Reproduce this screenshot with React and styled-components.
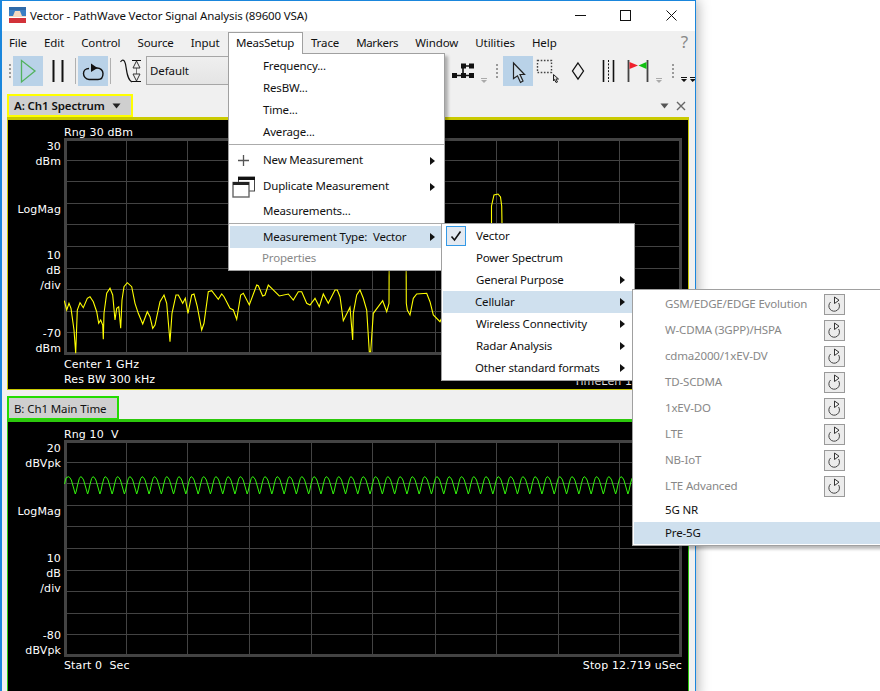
import React from "react";
import styled, { createGlobalStyle } from "styled-components";

const Global = createGlobalStyle`
  html, body { margin: 0; padding: 0; background: #fff; }
  body { width: 880px; height: 691px; overflow: hidden; font-family: "Noto Sans", "Open Sans", sans-serif; font-size: 11.5px; letter-spacing: -0.1px; color: #111; }
  #root { width: 880px; height: 691px; }
`;

const Page = styled.div`
  position: relative; width: 880px; height: 691px; overflow: hidden; background: #fff;
`;
const Window = styled.div`
  width: 696px; height: 700px; box-sizing: border-box; display: flex; flex-direction: column;
  background: #f0f0f0; border: 1px solid #1a86dc; border-left-width: 2px; border-bottom: 0;
  box-shadow: 2px 0 12px rgba(0,0,0,.3);
`;
const TitleBar = styled.div`
  height: 30px; flex: none; box-sizing: border-box; background: #fff; display: flex; align-items: center; padding: 0 0 2px 7px;
`;
const TitleText = styled.span`
  margin-left: 4px; color: #111; white-space: nowrap; letter-spacing: -0.14px;
`;
const Caption = styled.div`
  margin-left: auto; display: flex; padding-right: 1px;
`;
const CaptionButton = styled.div`
  width: 45.5px; height: 28px; display: flex; align-items: center; justify-content: center;
`;
const MenuBar = styled.div`
  height: 23px; flex: none; display: flex; align-items: center; padding-left: 7px; gap: 17px; position: relative;
`;
const MenuTitle = styled.span`
  white-space: nowrap; color: #111; letter-spacing: ${p => p.$ls ?? -0.1}px;
`;
const HelpMark = styled.span`
  position: absolute; right: 7px; top: 0; font-size: 17px; line-height: 22px; color: #888;
`;
const Toolbar = styled.div`
  height: 36px; flex: none; display: flex; align-items: flex-start; padding: 2px 0 0 5px; box-sizing: border-box;
`;
const Slot = styled.div`
  width: ${p => p.$w || 30}px; height: 30px; flex: none; margin-left: ${p => p.$ml || 0}px;
  background: ${p => (p.$active ? "#b9d2e8" : "transparent")}; display: flex; align-items: center; justify-content: center;
`;
const Grip = styled.i`
  display: block; width: 2px; height: 16px; margin-top: 2px;
  background: repeating-linear-gradient(to bottom, #9a9a9a 0 2px, transparent 2px 4px);
`;
const ToolSep = styled.i`
  display: block; width: 1px; height: 26px; background: #b0b0b0;
`;
const Combo = styled.div`
  width: 299px; height: 29px; flex: none; box-sizing: border-box; border: 1px solid #a6a6a6; background: linear-gradient(#efefef, #e4e4e4);
  display: flex; align-items: center; padding-left: 3px; color: #111;
`;
const PanelArea = styled.div`
  flex: 1; display: flex; flex-direction: column; padding: 0 6px 0 5px; min-height: 0;
`;
const PanelHeader = styled.div`
  height: ${p => p.$h}px; flex: none; box-sizing: border-box; display: flex; align-items: flex-end;
`;
const Tab = styled.div`
  height: 23px; width: ${p => p.$w}px; box-sizing: border-box; border: 2px solid ${p => p.$color};
  background: #cfcfcf; display: flex; align-items: center; padding-left: 5px; gap: 7px; white-space: nowrap;
  font-weight: ${p => (p.$bold ? 600 : 400)}; color: #111; border-bottom-width: ${p => (p.$bold ? 2 : 1)}px;
`;
const PanelTools = styled.div`
  margin-left: auto; display: flex; align-items: center; gap: 7px; height: 23px; padding-right: 3px;
`;
const Scope = styled.div`
  flex: none; background: #000; box-sizing: border-box; border: 1px solid ${p => p.$color};
  border-top: 3px solid ${p => p.$color}; border-bottom-width: ${p => (p.$open ? 0 : 1)}px; height: ${p => p.$h}px;
  display: grid; grid-template-columns: 53px 618px; column-gap: 3px; grid-template-rows: ${p => p.$top}px 217px 1fr;
  color: #fff; font-family: "DejaVu Sans", sans-serif; font-size: 11px; letter-spacing: .12px; line-height: 15px;
`;
const RangeLabel = styled.div`
  grid-column: 2; grid-row: 1; align-self: end; line-height: 13px; margin-bottom: -1px; white-space: nowrap;
`;
const Axis = styled.div`
  grid-column: 1; grid-row: 2; display: flex; flex-direction: column; align-items: flex-end; padding-top: ${p => p.$pad}px;
`;
const AxisGroup = styled.div`
  text-align: right; margin-top: ${p => p.$mt || 0}px; white-space: nowrap;
`;
const Plot = styled.svg`
  grid-column: 2; grid-row: 2; display: block;
`;
const ScopeFooter = styled.div`
  grid-column: 2; grid-row: 3; display: flex; justify-content: space-between; align-items: flex-start; padding-top: ${p => p.$pad}px; white-space: nowrap;
`;
const FooterLow = styled.span`
  margin-top: ${p => p.$mt || 0}px;
`;
const Menu = styled.div`
  position: absolute; left: ${p => p.$x}px; top: ${p => p.$y}px; width: ${p => p.$w}px; box-sizing: border-box;
  background: #fff; border: 1px solid #a0a0a0; padding: 1px; box-shadow: 3px 3px 3px rgba(0,0,0,.28); color: #111; z-index: ${p => p.$z};
  letter-spacing: -0.17px;
`;
const TabOpen = styled.div`
  position: absolute; left: 228px; top: 32px; width: 75px; height: 22px; box-sizing: border-box; background: #fff; z-index: 5;
  border: 1px solid #a0a0a0; border-bottom: 0; padding-left: 7px; line-height: 20px; color: #111; letter-spacing: -0.2px;
`;
const Row = styled.div`
  height: ${p => p.$h || 22}px; box-sizing: border-box; display: flex; align-items: center; padding: 0 0 2px ${p => p.$indent}px; white-space: pre; position: relative;
  background: ${p => (p.$hi ? "#cfe0ee" : "transparent")}; color: ${p => (p.$off ? "#888" : "inherit")};
`;
const Separator = styled.div`
  height: 1px; background: #ababab; margin: ${p => p.$mt}px -1px ${p => p.$mb}px;
`;
const Arrow = styled.i`
  position: absolute; left: ${p => p.$x}px; top: 50%; margin-top: -4px; width: 0; height: 0;
  border-left: 5px solid #111; border-top: 4px solid transparent; border-bottom: 4px solid transparent;
`;
const Leading = styled.span`
  position: absolute; left: ${p => p.$x}px; top: 0; bottom: 0; display: flex; align-items: center;
`;
const CheckBox = styled.span`
  position: absolute; left: 3px; top: 1px; width: 20px; height: 20px; box-sizing: border-box; border: 1px solid #3399e6; background: #e3e9f1;
  display: flex; align-items: center; justify-content: center;
`;
const ResetButton = styled.span`
  position: absolute; left: 190px; top: 2.5px; width: 21px; height: 21px; box-sizing: border-box; border: 1px solid #9a9a9a; background: #ececec;
  display: flex; align-items: center; justify-content: center;
`;

const toPoints = a => a.map(([x, y]) => `${x},${y}`).join(" ");
// read from the reference, in page coordinates
const zoomPts = [[193,92],[200,120],[207,100],[213,115],[222,180],[227,250],[232,120],[240,98],[250,113],[262,85],[270,80],[280,95],[290,125],[296,160],[302,150],[308,165],[310,208],[312,130],[320,70],[330,55],[338,75],[345,150],[350,115],[356,110],[362,175],[366,90],[372,50],[382,38],[395,50],[405,100],[415,130],[428,162],[442,125],[450,140],[458,175],[465,165],[480,95],[492,75],[500,100],[510,215],[516,130],[528,75],[535,75],[548,100],[556,85],[564,130],[575,75],[582,72],[592,110],[605,180],[612,160],[625,65],[635,62],[655,88],[665,72],[672,80],[690,115],[700,120],[710,148],[722,75],[730,70],[748,105],[770,45],[775,47],[788,78],[795,75],[805,45],[815,55],[838,78],[865,72],[880,90],[895,65],[905,65],[920,100],[930,105],[945,85],[958,110],[970,72],[985,100],[1005,60],[1012,60],[1020,80],[1030,152],[1050,112],[1058,210],[1060,130],[1070,75],[1080,60],[1090,85],[1100,120],[1108,245],[1112,245],[1120,130],[1148,92],[1160,125],[1167,100],[1168,-120]];
const zoomPts2 = [[1218,-120],[1219,100],[1222,120],[1230,135],[1240,85],[1250,72],[1280,70],[1290,95],[1300,135],[1320,155]];
const spectrum = [...zoomPts, ...zoomPts2].map(([x, y]) => [+(x / 3).toFixed(1), +(270 + y / 3).toFixed(1)])
  .concat([[450,300],[470,300],[488,290],[491.5,224],[491.5,206],[494,195],[498,194],[500.5,197],[501.7,206],[502,224],[510,300],[560,310],[640,320]]);

const timeTrace = (() => {
  const shape = [[0,476.7],[1.5,477.5],[3,480],[5,487],[7,494],[8,491],[9.5,484],[11,478.5]];
  const out = [[64.5,484],[66,478]];
  for (let k = 0; k < 50; k++) for (const [dx, y] of shape) { const x = 68.3 + k * 12.28 + dx; if (x < 680) out.push([+x.toFixed(1), y]); }
  return out;
})();

const H_LINES = [22,43,65,86,108,130,151,173,194];
const V_LINES = [62,123,185,247,308,371,432,494,555];

const Chart = ({ children }) => (
  <Plot width="618" height="217" viewBox="0 0 618 217">
    {H_LINES.map(y => <line key={y} x1="3" x2="615" y1={y + .5} y2={y + .5} stroke="#434343" />)}
    {V_LINES.map(x => <line key={x} y1="3" y2="214" x1={x + .5} x2={x + .5} stroke="#434343" />)}
    <rect x="1.5" y="1.5" width="615" height="214" fill="none" stroke="#434343" strokeWidth="3" />
    {children}
  </Plot>
);

const AppIcon = () => (
  <svg width="17" height="16" viewBox="0 0 17 16">
    <rect width="17" height="16" fill="#3b7fc4" />
    <rect y="0" width="17" height="3" fill="#2f6aa8" />
    <path d="M0 9H4L6 4H11L13 9H17V11H0Z" fill="#f5d9c0" />
    <rect y="11" width="17" height="5" fill="#d2323a" />
    <rect y="10" width="17" height="1" fill="#fff" />
  </svg>
);
const Tri = ({ fill = "#555" }) => (
  <svg width="9" height="6" viewBox="0 0 9 6"><path d="M.5 .5H8.5L4.5 5.5Z" fill={fill} /></svg>
);
const MiniDrop = () => (
  <svg width="12" height="30" viewBox="0 0 12 30">
    <path d="M3 22.5H9" stroke="#aaa" /><path d="M3 24H9L6 27Z" fill="#aaa" />
  </svg>
);
const Chevrons = () => (
  <svg width="14" height="30" viewBox="0 0 14 30">
    <path d="M0 21.5H6M9 21.5H14" stroke="#111" /><path d="M0 23H6L3 26ZM9 23H14V24L11.5 26Z" fill="#111" />
  </svg>
);
const Icon30 = ({ children }) => <svg width="30" height="30" viewBox="0 0 30 30">{children}</svg>;

const ResetIcon = () => (
  <svg width="19" height="19" viewBox="0 0 19 19">
    <path d="M5.6 7A5.3 5.3 0 1 0 13.6 8" fill="none" stroke="#444" strokeWidth="1" />
    <path d="M9.5 2V8.5L14 5.2Z" fill="#f6f6f6" stroke="#333" strokeWidth="1" />
  </svg>
);

const Arrowed = ({ x }) => <Arrow $x={x} />;

const CELLULAR = ["GSM/EDGE/EDGE Evolution","W-CDMA (3GPP)/HSPA","cdma2000/1xEV-DV","TD-SCDMA","1xEV-DO","LTE","NB-IoT","LTE Advanced"];
const MENUS = ["File","Edit","Control","Source","Input"];

export default function App() {
  return (
    <Page>
      <Global />
      <Window>
        <TitleBar>
          <AppIcon />
          <TitleText>Vector - PathWave Vector Signal Analysis (89600 VSA)</TitleText>
          <Caption>
            <CaptionButton><svg width="11" height="11"><path d="M0 5.5H11" stroke="#111" /></svg></CaptionButton>
            <CaptionButton><svg width="11" height="11"><rect x=".5" y=".5" width="10" height="10" fill="none" stroke="#111" /></svg></CaptionButton>
            <CaptionButton><svg width="11" height="11"><path d="M.5 .5L10.5 10.5M10.5 .5L.5 10.5" stroke="#111" /></svg></CaptionButton>
          </Caption>
        </TitleBar>
        <MenuBar>
          {MENUS.map(m => <MenuTitle key={m}>{m}</MenuTitle>)}
          <MenuTitle $ls={-0.3}>MeasSetup</MenuTitle>
          <MenuTitle>Trace</MenuTitle>
          <MenuTitle $ls={-0.35}>Markers</MenuTitle>
          <MenuTitle>Window</MenuTitle>
          <MenuTitle>Utilities</MenuTitle>
          <MenuTitle>Help</MenuTitle>
          <HelpMark>?</HelpMark>
        </MenuBar>
        <Toolbar>
          <Slot $w={6}><Grip /></Slot>
          <Slot $active><Icon30><path d="M8.5 4.5V26L22 15Z" fill="none" stroke="#52b25e" strokeWidth="1.3" /></Icon30></Slot>
          <Slot><Icon30><path d="M10.5 4V26M19.5 4V26" stroke="#111" strokeWidth="2" /></Icon30></Slot>
          <Slot $w={5}><ToolSep /></Slot>
          <Slot $active><Icon30>
            <path d="M11 12.5C7.5 12.5 5.5 15 5.5 17.5S7.5 23.5 11 23.5H20C23.5 23.5 25 20.5 25 17.5S22.5 12 19 12H14" fill="none" stroke="#111" strokeWidth="1.4" />
            <path d="M13 7.5V16L19.5 12Z" fill="#111" />
          </Icon30></Slot>
          <Slot $w={5}><ToolSep /></Slot>
          <Slot $w={33}><svg width="33" height="30" viewBox="0 0 33 30">
            <path d="M7.5 6C10 2.5 12 4 13 11S15 24 19 26" fill="none" stroke="#111" strokeWidth="1.2" />
            <path d="M19 4.5H28M19 25.5H28" stroke="#111" strokeWidth="1.2" />
            <path d="M23.5 5V25" stroke="#777" />
            <path d="M23.5 5L27 12H20ZM23.5 25L20 18H27Z" fill="#eee" stroke="#333" />
          </svg></Slot>
          <Combo>Default</Combo>
          <Slot $ml={3}><Icon30>
            <path d="M4 19.5H26M15 10V19.5M15 10H26" stroke="#111" strokeWidth="1.6" />
            <rect x="4" y="17" width="5" height="5" fill="#111" />
            <rect x="13" y="17" width="5" height="5" fill="#111" />
            <rect x="21" y="17" width="5" height="5" fill="#111" />
            <rect x="13" y="7.5" width="5" height="5" fill="#111" />
            <rect x="21" y="7.5" width="5" height="5" fill="#111" />
          </Icon30></Slot>
          <Slot $w={12}><MiniDrop /></Slot>
          <Slot $w={13}><Grip /></Slot>
          <Slot $active><Icon30>
            <path d="M10.5 7L21.5 18.5L17 18.5L20 25L17.5 26.5L14.5 19.8L10.5 22.5Z" fill="#c9dbe9" stroke="#222" strokeWidth="1.2" />
          </Icon30></Slot>
          <Slot><Icon30>
            <rect x="4.5" y="4.5" width="14" height="12" fill="none" stroke="#444" strokeDasharray="1.6 1.6" strokeWidth="1.4" />
            <path d="M20.5 18.5L25.5 23H23L24.5 26L23 26.5L21.5 23.5L20.5 25Z" fill="#ddd" stroke="#222" />
          </Icon30></Slot>
          <Slot><Icon30><path d="M15 7L20.5 15L15 23L9.5 15Z" fill="none" stroke="#111" strokeWidth="1.3" /></Icon30></Slot>
          <Slot><Icon30>
            <path d="M10.5 4V26M20.5 4V26" stroke="#111" strokeWidth="1.6" />
            <path d="M15.5 4V26" stroke="#111" strokeDasharray="2 1.4" />
          </Icon30></Slot>
          <Slot><Icon30>
            <path d="M5.5 4V26M24.5 4V26" stroke="#444" strokeWidth="1.8" />
            <path d="M6.5 6V13L15 9.5Z" fill="#f0202c" />
            <path d="M23.5 6V13L15.5 9.5Z" fill="#10c010" />
          </Icon30></Slot>
          <Slot $w={12}><MiniDrop /></Slot>
          <Slot $w={16}><Grip /></Slot>
          <Slot $w={14}><Chevrons /></Slot>
        </Toolbar>
        <PanelArea>
          <PanelHeader $h={27}>
            <Tab $w={126} $color="#ffff00" $bold>A: Ch1 Spectrum <Tri fill="#222" /></Tab>
            <PanelTools>
              <Tri />
              <svg width="10" height="10"><path d="M1 1L9 9M9 1L1 9" stroke="#666" strokeWidth="1.4" /></svg>
            </PanelTools>
          </PanelHeader>
          <Scope $color="#c9c900" $h={273} $top={18}>
            <RangeLabel>Rng 30 dBm</RangeLabel>
            <Axis $pad={1}>
              <AxisGroup>30<br />dBm</AxisGroup>
              <AxisGroup $mt={33}>LogMag</AxisGroup>
              <AxisGroup $mt={31}>10<br />dB<br />/div</AxisGroup>
              <AxisGroup $mt={33}>-70<br />dBm</AxisGroup>
            </Axis>
            <Chart>
              <g transform="translate(-64,-138)">
                <polyline points={toPoints(spectrum)} fill="none" stroke="#ffff00" strokeWidth="1.1" />
              </g>
            </Chart>
            <ScopeFooter $pad={2}>
              <span>Center 1 GHz<br />Res BW 300 kHz</span>
              <FooterLow $mt={17}>TimeLen 12.719 uS</FooterLow>
            </ScopeFooter>
          </Scope>
          <PanelHeader $h={29}>
            <Tab $w={112} $color="#22dd00">B: Ch1 Main Time</Tab>
          </PanelHeader>
          <Scope $color="#2cc80c" $h={280} $top={18} $open>
            <RangeLabel>Rng 10 &nbsp;V</RangeLabel>
            <Axis $pad={1}>
              <AxisGroup>20<br />dBVpk</AxisGroup>
              <AxisGroup $mt={33}>LogMag</AxisGroup>
              <AxisGroup $mt={32}>10<br />dB<br />/div</AxisGroup>
              <AxisGroup $mt={32}>-80<br />dBVpk</AxisGroup>
            </Axis>
            <Chart>
              <g transform="translate(-64,-440)">
                <polyline points={toPoints(timeTrace)} fill="none" stroke="#33f50c" strokeWidth="1" />
              </g>
            </Chart>
            <ScopeFooter $pad={1}>
              <span>Start 0 &nbsp;Sec</span>
              <span>Stop 12.719 uSec</span>
            </ScopeFooter>
          </Scope>
        </PanelArea>
      </Window>

      <TabOpen>MeasSetup</TabOpen>
      <Menu $x={228} $y={53} $w={217} $z={2}>
        <Row $indent={33}>Frequency...</Row>
        <Row $indent={33}>ResBW...</Row>
        <Row $indent={33}>Time...</Row>
        <Row $indent={33}>Average...</Row>
        <Separator $mt={1} $mb={3} />
        <Row $indent={33} $h={25}>
          <Leading $x={2}><svg width="24" height="13"><path d="M11.5 1V12M6 6.5H17" stroke="#555" strokeWidth="1.3" /></svg></Leading>
          New Measurement<Arrowed x={200} />
        </Row>
        <Row $indent={33} $h={27}>
          <Leading $x={2}><svg width="23" height="22" viewBox="0 0 23 22">
            <rect x="6.5" y="1" width="16" height="14" fill="#fff" stroke="#444" /><rect x="6" y="1" width="17" height="3" fill="#111" />
            <rect x="1" y="6.5" width="16" height="14.5" fill="#fff" stroke="#666" strokeWidth="1.4" /><rect x="1" y="6" width="16" height="3" fill="#222" />
          </svg></Leading>
          Duplicate Measurement<Arrowed x={200} />
        </Row>
        <Row $indent={33}>Measurements...</Row>
        <Separator $mt={1} $mb={2} />
        <Row $indent={33} $hi>Measurement Type:  Vector<Arrowed x={200} /></Row>
        <Row $indent={32} $h={21} $off>Properties</Row>
      </Menu>
      <Menu $x={441} $y={223} $w={194} $z={3}>
        <Row $indent={33}>
          <CheckBox><svg width="12" height="12"><path d="M1.5 6.5L4.5 10L10.5 1.5" fill="none" stroke="#111" strokeWidth="1.6" /></svg></CheckBox>
          Vector
        </Row>
        <Row $indent={33}>Power Spectrum</Row>
        <Row $indent={33}>General Purpose<Arrowed x={177} /></Row>
        <Row $indent={32} $hi>Cellular<Arrowed x={177} /></Row>
        <Row $indent={33}>Wireless Connectivity<Arrowed x={177} /></Row>
        <Row $indent={33}>Radar Analysis<Arrowed x={177} /></Row>
        <Row $indent={32}>Other standard formats<Arrowed x={177} /></Row>
      </Menu>
      <Menu $x={632} $y={289} $w={270} $z={4}>
        {CELLULAR.map(t => (
          <Row key={t} $indent={31} $h={26} $off>{t}<ResetButton><ResetIcon /></ResetButton></Row>
        ))}
        <Row $indent={31} $h={23}>5G NR</Row>
        <Row $indent={31} $hi>Pre-5G</Row>
      </Menu>
    </Page>
  );
}
